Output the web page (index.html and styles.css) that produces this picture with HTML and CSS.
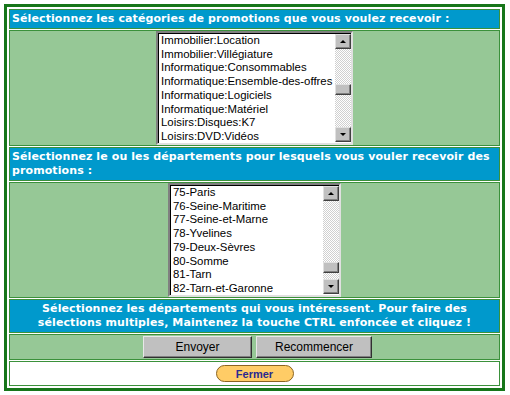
FILE: index.html
```html
<!DOCTYPE html>
<html lang="fr">
<head>
  <meta charset="UTF-8">
  <title>Promotions</title>
  <link rel="stylesheet" href="styles.css">
</head>
<body>

  <div class="frame">
    <div class="cell head">Sélectionnez les catégories de promotions que vous voulez recevoir :</div>

    <div class="cell green list-row">
      <div class="listbox lb-cat">
        <ul class="items">
          <li>Immobilier:Location</li>
          <li>Immobilier:Villégiature</li>
          <li>Informatique:Consommables</li>
          <li>Informatique:Ensemble-des-offres</li>
          <li>Informatique:Logiciels</li>
          <li>Informatique:Matériel</li>
          <li>Loisirs:Disques:K7</li>
          <li>Loisirs:DVD:Vidéos</li>
        </ul>
        <div class="scrollbar">
          <span class="arrow up"></span>
          <span class="track"><span class="thumb"></span></span>
          <span class="arrow down"></span>
        </div>
      </div>
    </div>

    <div class="cell head">Sélectionnez le ou les départements pour lesquels vous vouler recevoir des promotions :</div>

    <div class="cell green list-row">
      <div class="listbox lb-dep">
        <ul class="items">
          <li>75-Paris</li>
          <li>76-Seine-Maritime</li>
          <li>77-Seine-et-Marne</li>
          <li>78-Yvelines</li>
          <li>79-Deux-Sèvres</li>
          <li>80-Somme</li>
          <li>81-Tarn</li>
          <li>82-Tarn-et-Garonne</li>
        </ul>
        <div class="scrollbar">
          <span class="arrow up"></span>
          <span class="track"><span class="thumb"></span></span>
          <span class="arrow down"></span>
        </div>
      </div>
    </div>

    <div class="cell head center">Sélectionnez les départements qui vous intéressent. Pour faire des sélections multiples, Maintenez la touche CTRL enfoncée et cliquez !</div>

    <div class="cell green btn-row">
      <button class="btn btn-send">Envoyer</button>
      <button class="btn btn-reset">Recommencer</button>
    </div>

    <div class="cell white btn-row">
      <button class="close-btn">Fermer</button>
    </div>
  </div>

</body>
</html>
```

FILE: styles.css
```css
* {
  box-sizing: border-box;
}

body {
  margin: 0;
  background: #fff;
}

.frame {
  margin: 4px;
  width: 501px;
  border: 3px solid #17761a;
  padding: 2px;
  display: flex;
  flex-direction: column;
  gap: 1px;
}

.cell {
  border: 1px solid #3b913b;
}

.head {
  background: #0099cc;
  color: #fff;
  font: bold 11px "DejaVu Sans", Verdana, sans-serif;
  letter-spacing: 0.1px;
  line-height: 14px;
  padding: 2px 2px;
}

.center {
  text-align: center;
}

.green {
  background: #96c896;
}

.white {
  background: #fff;
}

.list-row {
  display: flex;
  justify-content: center;
}

/* old-style listbox */
.listbox {
  display: flex;
  background: #fff;
  border: 2px solid;
  border-color: #808080 #e0e0e0 #e0e0e0 #808080;
  box-shadow: inset 1px 1px #000;
  height: 114px;
}

.lb-cat {
  width: 197px;
}

.lb-dep {
  width: 173px;
}

.items {
  flex: 1;
  list-style: none;
  margin: 0;
  padding: 1px 0 0 3px;
  font: 11.4px "Liberation Sans", Arial, sans-serif;
  line-height: 13.7px;
  color: #000;
  overflow: hidden;
  white-space: nowrap;
}

.scrollbar {
  width: 16px;
  display: flex;
  flex-direction: column;
  margin: 1px 0;
}

.track {
  flex: 1;
  background: repeating-conic-gradient(#fff 0 25%, #d0d0d0 0 50%) 0 0 / 2px 2px;
}

.arrow,
.thumb {
  display: block;
  height: 15px;
  background: #c0c0c0;
  border: 1px solid;
  border-color: #e0e0e0 #404040 #404040 #e0e0e0;
  box-shadow: inset -1px -1px #808080;
  position: relative;
}

.thumb {
  height: 11px;
}

.lb-cat .thumb {
  margin-top: 35px;
}

.lb-dep .thumb {
  margin-top: 61px;
}

.arrow::after {
  content: "";
  position: absolute;
  left: 4px;
  border-left: 3px solid transparent;
  border-right: 3px solid transparent;
}

.up::after {
  top: 5px;
  border-bottom: 3px solid #000;
}

.down::after {
  top: 5px;
  border-top: 3px solid #000;
}

.btn-row {
  display: flex;
  justify-content: center;
  gap: 4px;
  padding: 1px 0;
}

.btn {
  height: 22px;
  font: 12px "Liberation Sans", Arial, sans-serif;
  color: #000;
  background: #c0c0c0;
  border: 1px solid;
  border-color: #e8e8e8 #303030 #303030 #e8e8e8;
  box-shadow: inset -1px -1px #808080;
  padding: 0;
}

.btn-send {
  width: 109px;
  margin-left: 6px;
}

.btn-reset {
  width: 116px;
}

.close-btn {
  width: 78px;
  height: 17px;
  margin: 2px 0;
  background: #ffcc66;
  border: 1px solid #8a6420;
  border-radius: 9px;
  color: #2a2a90;
  font: bold 11px "Liberation Sans", Arial, sans-serif;
  padding: 0;
}
```
